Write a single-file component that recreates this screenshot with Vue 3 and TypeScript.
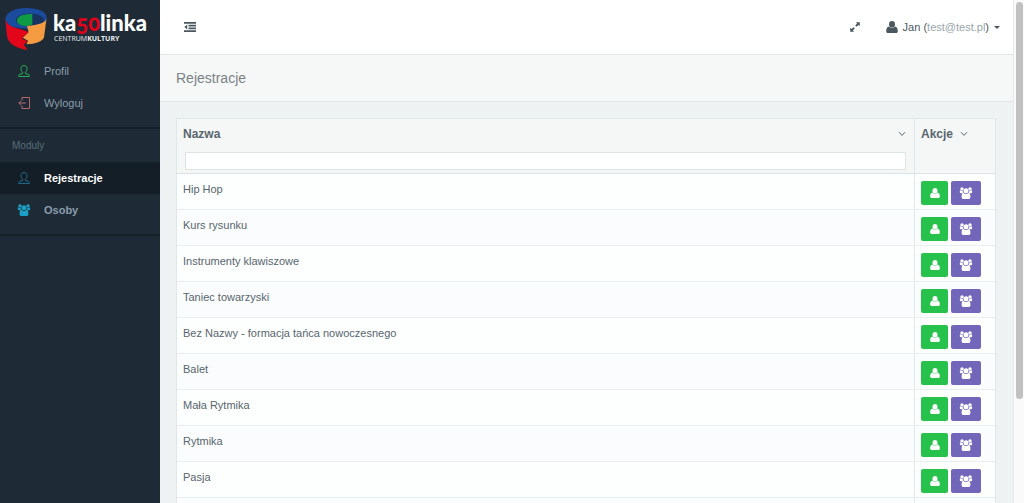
<script setup lang="ts">
import { ref } from 'vue'

const rows = ref<string[]>([
  'Hip Hop',
  'Kurs rysunku',
  'Instrumenty klawiszowe',
  'Taniec towarzyski',
  'Bez Nazwy - formacja tańca nowoczesnego',
  'Balet',
  'Mała Rytmika',
  'Rytmika',
  'Pasja',
])
const filter = ref('')
</script>

<template>
  <div class="app">
    <svg class="defs" aria-hidden="true">
      <symbol id="user-solid" viewBox="0 0 12 12">
        <ellipse cx="6" cy="3.300" rx="3" ry="3.300" />
        <path d="M3 5.400C1 5.800.2 7.700.2 10.200c0 1 .8 1.800 1.700 1.800h8.200c.9 0 1.700-.8 1.700-1.800 0-2.500-.8-4.400-2.800-4.800a3.900 3.900 0 0 1-6 0z" />
      </symbol>
      <symbol id="users-solid" viewBox="0 0 14 12">
        <circle cx="3" cy="1.900" r="1.700" />
        <circle cx="11" cy="1.900" r="1.700" />
        <circle cx="7" cy="3.800" r="2.500" />
        <path d="M1.600 3.300C.5 3.400.5 6.200 1.700 6.200h1.700c.3-.3.6-.5.9-.6-.4-.5-.6-1-.6-1.600-.8.200-1.500-.1-2.100-.7zM12.400 3.300c1.100.1 1.100 2.900-.1 2.900h-1.700c-.3-.3-.6-.5-.9-.6.4-.5.6-1 .6-1.600.8.2 1.500-.1 2.100-.7zM4.500 5.800C3 6.100 2.600 8 2.600 10.300c0 1 .7 1.700 1.500 1.700h5.800c.8 0 1.500-.7 1.500-1.700 0-2.300-.4-4.200-1.900-4.500a3.500 3.500 0 0 1-5 0z" />
      </symbol>
      <symbol id="user-line" viewBox="0 0 12 12">
        <path d="M4.600 7.300C3.400 6.400 3 5 3 3.600 3 1.800 4.200.6 6 .6s3 1.200 3 3c0 1.400-.4 2.800-1.600 3.700v1.100l3 1c.7.3 1 .8 1 2H.6c0-1.200.3-1.700 1-2l3-1z" fill="none" stroke="currentColor" />
      </symbol>
      <symbol id="chevron" viewBox="0 0 8 6">
        <path d="M1 1.200 4 4.400 7 1.200" fill="none" stroke="currentColor" />
      </symbol>
    </svg>

    <aside class="sidebar">
      <a href="#" class="brand" aria-label="ka50linka Centrum Kultury">
        <svg viewBox="0 0 160 56" class="logo">
          <path d="M5.300 20C5.300 13 13 8.300 26 8c13 0 20.700 4 20.700 10L44 26 28 29 10 27z" fill="#1b4b9c" />
          <ellipse cx="30" cy="20" rx="14" ry="6.500" fill="#17335f" />
          <path d="M17 20.500C17 16.500 22 14 32.300 14v10.500l-5 1.500C21 26 17 24 17 20.500z" fill="#0f9b45" />
          <path d="M46.500 18.500c-1 4.500-8 6.500-19.500 7.500l1.600 6.200-5.900 5.500 5.300 3-1.500 3.600C36 44 42 41.500 44 37.500z" fill="#f59b42" />
          <path d="M5.300 19.500C7 25 13 28 20 29l8.600 3-6.900 6.500 5.800 2.700-3.700 3.600 3.700 5C17 48.500 8 44 7 36z" fill="#e3061a" />
          <text x="53" y="31" class="word">ka<tspan class="fifty">50</tspan>linka</text>
          <text x="54" y="41" class="sub">CENTRUM<tspan class="strong">KULTURY</tspan></text>
        </svg>
      </a>
      <nav>
        <ul class="group">
          <li><a href="#" class="item"><svg class="ico green"><use href="#user-line" /></svg>Profil</a></li>
          <li>
            <a href="#" class="item">
              <svg class="ico red" viewBox="0 0 12 12"><path d="M4 3.500V.5h7.500v11H4v-3M8 6H.8M3 3.800.8 6 3 8.200" fill="none" stroke="currentColor" /></svg>Wyloguj
            </a>
          </li>
        </ul>
        <div class="group modules">
          <h2>Moduly</h2>
          <ul>
            <li><a href="#" class="item bold active"><svg class="ico blue"><use href="#user-line" /></svg>Rejestracje</a></li>
            <li><a href="#" class="item bold"><svg class="ico cyan"><use href="#users-solid" /></svg>Osoby</a></li>
          </ul>
        </div>
      </nav>
    </aside>

    <div class="page">
      <header class="topbar">
        <button type="button" class="plain" aria-label="Menu">
          <svg class="menu" viewBox="0 0 12 10"><path d="M0 .9h12M4.500 3.600H12M4.500 6.400H12M0 9.100h12" stroke="currentColor" stroke-width="1.800" /><path d="M3.200 2.600v4.800L.4 5z" fill="currentColor" /></svg>
        </button>
        <div class="right">
          <button type="button" class="plain" aria-label="Pełny ekran">
            <svg class="expand" viewBox="0 0 10 10"><path d="M5.800.2h4v4L8.500 2.900 6.600 4.800l-1.400-1.400 1.900-1.900zM4.200 9.800h-4v-4l1.300 1.300 1.900-1.900 1.400 1.400-1.900 1.900z" fill="currentColor" /></svg>
          </button>
          <button type="button" class="plain account">
            <svg class="avatar"><use href="#user-solid" /></svg>
            <span>Jan (<span class="mail">test@test.pl</span>)</span>
            <i class="caret"></i>
          </button>
        </div>
      </header>
      <h1>Rejestracje</h1>
      <main>
        <table>
          <thead>
            <tr>
              <th scope="col">
                <div class="head">Nazwa<svg class="chev"><use href="#chevron" /></svg></div>
                <input v-model="filter" type="text" aria-label="Nazwa" />
              </th>
              <th scope="col" class="actions">
                <div class="head near">Akcje<svg class="chev"><use href="#chevron" /></svg></div>
              </th>
            </tr>
          </thead>
          <tbody>
            <tr v-for="row in rows" :key="row">
              <td>{{ row }}</td>
              <td>
                <div class="buttons">
                  <button type="button" class="btn one" aria-label="Osoba"><svg><use href="#user-solid" /></svg></button>
                  <button type="button" class="btn many" aria-label="Grupa"><svg><use href="#users-solid" /></svg></button>
                </div>
              </td>
            </tr>
            <tr><td></td><td></td></tr>
          </tbody>
        </table>
      </main>
    </div>
    <div class="scroll" aria-hidden="true"><div class="thumb"></div></div>
  </div>
</template>

<style>
body {
  margin: 0;
  overflow: hidden;
}
</style>

<style scoped>
* {
  box-sizing: border-box;
}
.app {
  display: flex;
  height: 100vh;
  overflow: hidden;
  background: #eef2f3;
  color: #58666e;
  font: 11px/16px "Liberation Sans", Arial, sans-serif;
}
.defs {
  display: none;
}
svg {
  display: block;
  flex: none;
  fill: currentColor;
}
ul,
h1,
h2 {
  margin: 0;
  padding: 0;
  list-style: none;
  font-weight: normal;
}
a {
  color: inherit;
  text-decoration: none;
}
.sidebar {
  flex: none;
  width: 160px;
  background: #1e2b36;
  color: #8a9cab;
}
.brand,
.logo {
  display: block;
  width: 100%;
}
.brand {
  height: 55px;
}
.word {
  font: 900 22px Lato, sans-serif;
  font-variant-numeric: oldstyle-nums;
  fill: #fff;
}
.fifty {
  fill: #e2001a;
}
.sub {
  font: 7px "Open Sans", sans-serif;
  fill: #e8ecef;
}
.strong {
  font-weight: bold;
}
.group {
  padding-bottom: 8px;
  border-bottom: 2px solid #15202a;
}
.item {
  display: flex;
  align-items: center;
  gap: 13px;
  height: 32px;
  padding-left: 17px;
}
.bold {
  font-weight: bold;
}
.active {
  background: #131e26;
  color: #fff;
}
.ico {
  width: 14px;
  height: 12px;
}
.green {
  color: #27b355;
}
.red {
  color: #b3686c;
}
.blue {
  color: #1f6f91;
}
.cyan {
  color: #1c9fc4;
}
h2 {
  padding: 9px 12px 8px;
  color: #586b7a;
  font-size: 10px;
}
.page {
  flex: 1;
  min-width: 0;
}
.topbar {
  display: flex;
  align-items: center;
  justify-content: space-between;
  height: 55px;
  padding: 0 13px 0 24px;
  border-bottom: 1px solid #e2e6e7;
  background: #fff;
}
.plain {
  display: flex;
  align-items: center;
  padding: 0;
  border: 0;
  background: none;
  color: #4b5860;
  font: inherit;
}
.right,
.account {
  display: flex;
  align-items: center;
}
.right {
  gap: 26px;
}
.account {
  gap: 5px;
}
.menu {
  width: 12px;
  height: 10px;
}
.expand {
  width: 10px;
  height: 10px;
}
.avatar {
  width: 12px;
  height: 12px;
}
.mail {
  color: #98a6ad;
}
.caret {
  border: 3px solid transparent;
  border-top: 3px solid currentColor;
  border-bottom: 0;
}
h1 {
  height: 47px;
  padding-left: 16px;
  border-bottom: 1px solid #e0e5e7;
  background: #f6f8f8;
  color: #7a8287;
  font-size: 14px;
  line-height: 46px;
}
main {
  padding: 16px 17px 0 16px;
}
table {
  width: 100%;
  border: 1px solid #dfe7e9;
  border-spacing: 0;
  table-layout: fixed;
  background: #fdfefe;
}
th {
  height: 55px;
  padding: 7px 6px 0;
  border-bottom: 1px solid #dbe3e6;
  background: #f5f7f7;
  font-size: 12px;
  text-align: left;
  vertical-align: top;
}
.actions {
  width: 81px;
}
th:last-child,
td:last-child {
  border-left: 1px solid #dfe8eb;
}
.head {
  display: flex;
  align-items: center;
  justify-content: space-between;
  padding-right: 2px;
}
.near {
  justify-content: flex-start;
  gap: 7px;
}
.chev {
  width: 8px;
  height: 6px;
}
input {
  display: block;
  width: calc(100% - 4px);
  height: 18px;
  margin: 10px 2px 0;
  border: 1px solid #dde4e6;
  background: #fff;
  font: inherit;
}
td {
  height: 36px;
  padding: 7px 6px 0;
  border-bottom: 1px solid #e8eff2;
  vertical-align: top;
}
tbody tr:nth-child(even) td {
  background: #fafcfd;
}
.buttons {
  display: flex;
  gap: 3px;
}
.btn {
  display: grid;
  place-items: center;
  height: 24px;
  padding: 0;
  border: 0;
  border-radius: 2px;
  color: #fff;
}
.one {
  width: 27px;
  background: #27c24c;
}
.many {
  width: 30px;
  background: #7266ba;
}
.one svg {
  width: 10px;
  height: 10px;
}
.many svg {
  width: 14px;
  height: 12px;
}
.scroll {
  flex: none;
  width: 11px;
  padding: 2px;
  border-left: 1px solid #e8e8e8;
  background: #fafafa;
}
.thumb {
  width: 7px;
  height: 79.5%;
  border-radius: 4px;
  background: #c1c1c1;
}
</style>
